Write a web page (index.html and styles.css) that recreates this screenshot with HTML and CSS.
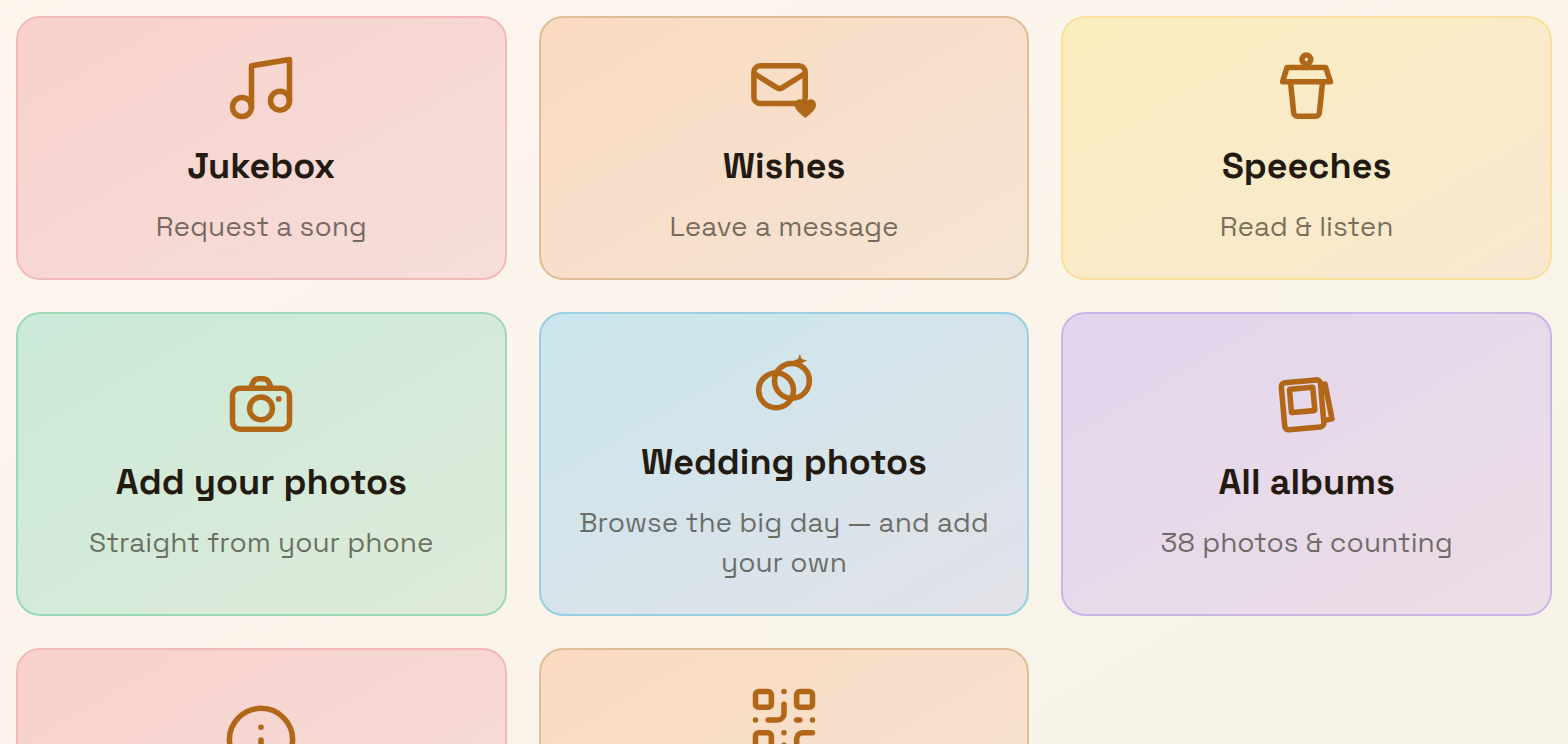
FILE: index.html
```html
<!DOCTYPE html>
<html lang="en">
<head>
<meta charset="utf-8">
<meta name="viewport" content="width=device-width, initial-scale=1">
<title>Wedding photos</title>
<link rel="stylesheet" href="styles.css">
</head>
<body>
<main class="tiles">
  <a class="tile rose" href="#jukebox">
    <svg class="icon" viewBox="0 0 24 24" aria-hidden="true"><path d="M9 18V5l12-2v13"/><circle cx="6" cy="18" r="3"/><circle cx="18" cy="16" r="3"/></svg>
    <span class="title">Jukebox</span>
    <span class="sub">Request a song</span>
  </a>
  <a class="tile peach" href="#wishes">
    <svg class="icon" viewBox="0 0 24 24" aria-hidden="true"><rect x="2.5" y="5" width="16.2" height="11.9" rx="2"/><path d="M2.7 7.5l7 4.4a1.700 1.700 0 0 0 1.800 0l7-4.400"/><path class="solid" d="M18.750 21.500C17 20 15.400 19 15.400 17.400C15.400 15.500 17.600 14.900 18.750 16.500C19.900 14.900 22.100 15.500 22.100 17.400C22.100 19 20.500 20 18.750 21.500z"/></svg>
    <span class="title">Wishes</span>
    <span class="sub">Leave a message</span>
  </a>
  <a class="tile lemon" href="#speeches">
    <svg class="icon" viewBox="0 0 24 24" aria-hidden="true"><circle cx="11.8" cy="3" r="1.4"/><path d="M5.700 5.500h12.200l1.500 4.500H4.300z"/><path d="M6.800 10.200l1 9.700a1.100 1.100 0 0 0 1.100 1h5.900a1.100 1.100 0 0 0 1.100-1l1-9.700"/></svg>
    <span class="title">Speeches</span>
    <span class="sub">Read &amp; listen</span>
  </a>
  <a class="tile mint" href="#upload">
    <svg class="icon" viewBox="0 0 24 24" aria-hidden="true"><rect x="3" y="7" width="18" height="13" rx="2.4"/><path d="M8.700 7l.8-1.800A2 2 0 0 1 11.300 4h1.400a2 2 0 0 1 1.800 1.200l.8 1.800"/><circle cx="12" cy="13.400" r="3.600"/><circle class="solid" cx="17.600" cy="10.400" r=".9"/></svg>
    <span class="title">Add your photos</span>
    <span class="sub">Straight from your phone</span>
  </a>
  <a class="tile sky" href="#wedding">
    <svg class="icon" viewBox="0 0 24 24" aria-hidden="true"><circle cx="9.500" cy="14" r="5.500"/><circle cx="14.500" cy="11" r="5.500"/><path class="solid" d="M17 2.500l.6 1.600 1.700.5-1.600.8-.7 1.600-.7-1.600-1.700-.6 1.800-.7z"/></svg>
    <span class="title">Wedding photos</span>
    <span class="sub">Browse the big day — and add your own</span>
  </a>
  <a class="tile lilac" href="#albums">
    <svg class="icon" viewBox="0 0 24 24" aria-hidden="true"><g transform="rotate(-5 10.600 12.200)"><rect x="4.400" y="4.800" width="12.400" height="14.900" rx="1.200"/><rect x="6.900" y="7" width="7.400" height="7.400" rx=".3"/></g><path d="M17.700 5.700l2.200 11-1.900.4"/></svg>
    <span class="title">All albums</span>
    <span class="sub">38 photos &amp; counting</span>
  </a>
  <a class="tile rose" href="#info">
    <svg class="icon" viewBox="0 0 24 24" aria-hidden="true"><circle cx="12" cy="12" r="10"/><path d="M12 16v-4M12 8h.01"/></svg>
    <span class="title"></span>
    <span class="sub"></span>
  </a>
  <a class="tile peach" href="#qr">
    <svg class="icon" viewBox="0 0 24 24" aria-hidden="true"><rect x="3" y="3" width="5" height="5" rx="1"/><rect x="16" y="3" width="5" height="5" rx="1"/><rect x="3" y="16" width="5" height="5" rx="1"/><path d="M21 16h-3a2 2 0 0 0-2 2v3M21 21v.01M12 7v3a2 2 0 0 1-2 2H7M3 12h.01M12 3h.01M12 16v.01M16 12h1M21 12v.01M12 21v-1"/></svg>
    <span class="title"></span>
    <span class="sub sub-double"></span>
  </a>
</main>
</body>
</html>
```

FILE: styles.css
```css
* {
  box-sizing: border-box;
}

html {
  overflow: hidden;
}

body {
  margin: 0;
  min-height: 100vh;
  background: linear-gradient(150deg, #fff6ee 0%, #faf4eb 45%, #f7f3e6 100%);
  font-family: "Space Grotesk", Inter, sans-serif;
}

.tiles {
  display: grid;
  grid-template-columns: repeat(3, minmax(0, 1fr));
  gap: 32px;
  padding: 16px;
}

.tile {
  display: flex;
  flex-direction: column;
  align-items: center;
  justify-content: center;
  gap: 16px;
  padding: 32px;
  border: 2px solid;
  border-radius: 24px;
  text-align: center;
  text-decoration: none;
}

.icon {
  width: 76px;
  height: 76px;
  fill: none;
  stroke: #b06717;
  stroke-width: 1.75;
  stroke-linecap: round;
  stroke-linejoin: round;
}

.solid {
  fill: #b06717;
  stroke: none;
}

.title {
  min-height: 48px;
  color: #231b11;
  font-size: 36px;
  font-weight: 600;
  line-height: 48px;
}

.sub {
  min-height: 40px;
  color: rgba(35, 27, 17, 0.6);
  font-size: 28px;
  line-height: 40px;
}

.sub-double {
  min-height: 80px;
}

.rose {
  background: linear-gradient(150deg, #f8d1cb, #f6dedb);
  border-color: #f3b9b8;
}

.peach {
  background: linear-gradient(150deg, #fadac1, #f5e4d4);
  border-color: #dfbe95;
}

.lemon {
  background: linear-gradient(150deg, #faeebf, #f8e8d1);
  border-color: #fae09a;
}

.mint {
  background: linear-gradient(150deg, #cae9d8, #dfebd9);
  border-color: #9bd9b7;
}

.sky {
  background: linear-gradient(150deg, #c9e6ec, #e2e2e8);
  border-color: #98cfe3;
}

.lilac {
  background: linear-gradient(150deg, #e2d5ee, #ecdee5);
  border-color: #c9b5e8;
}
```
